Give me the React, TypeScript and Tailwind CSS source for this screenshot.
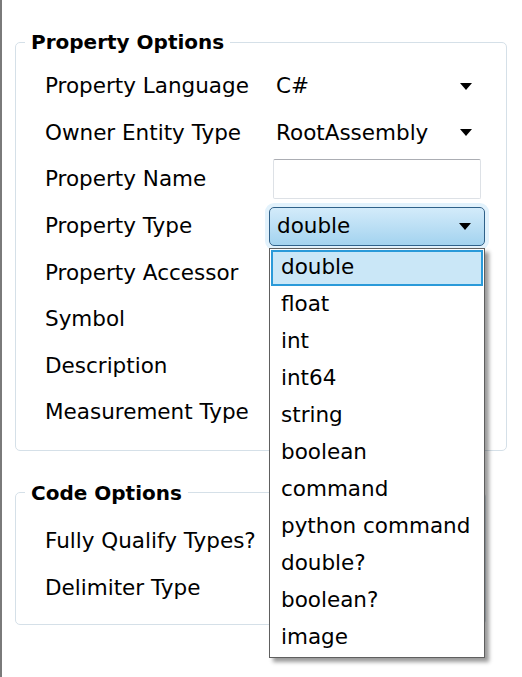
import React from "react";

const font = { fontFamily: '"DejaVu Sans", "Liberation Sans", sans-serif' };

const Arrow = () => (
  <svg width="12" height="7" viewBox="0 0 12 7" className="shrink-0">
    <path d="M0 0 H12 L6 7 Z" fill="#000" />
  </svg>
);

const PlainCombo: React.FC<{ value: string }> = ({ value }) => (
  <div className="h-[40px] flex items-center justify-between pl-[7px] pr-[13px]">
    <span>{value}</span>
    <Arrow />
  </div>
);

const typeOptions = [
  "double",
  "float",
  "int",
  "int64",
  "string",
  "boolean",
  "command",
  "python command",
  "double?",
  "boolean?",
  "image",
];

const TypeCombo = () => (
  <div className="relative">
    <div className="h-[39px] flex items-center justify-between pl-[7px] pr-[13px] rounded-[5px] border-[1.5px] border-[#2f6189] bg-gradient-to-b from-[#d3ebfa] to-[#a3d3ef] shadow-[0_0_0_4px_#e2f2fc]">
      <span>double</span>
      <Arrow />
    </div>

    {/* open drop-down list */}
    <div className="absolute left-0 top-full mt-[2px] w-[216px] z-10 bg-white border border-[#5f5f5f] p-[1px] shadow-[4px_4px_4px_rgba(0,0,0,0.4)]">
      {typeOptions.map((opt, i) => (
        <div
          key={opt}
          className={
            i === 0
              ? "h-[36px] flex items-center pl-[8px] border-2 border-[#2a9ad9] bg-[#cae7f7]"
              : "h-[37px] flex items-center pl-[10px]"
          }
        >
          {opt}
        </div>
      ))}
    </div>
  </div>
);

const Row: React.FC<{ label: string; children?: React.ReactNode }> = ({ label, children }) => (
  <div className="h-[46.6px] grid grid-cols-[224px_216px] items-center">
    <span>{label}</span>
    <div>{children}</div>
  </div>
);

export default function App() {
  return (
    <div
      style={font}
      className="w-[522px] h-[677px] bg-white border-l-2 border-[#7a7a7a] pl-[13px] pt-[30px] text-[21.5px] text-black overflow-hidden"
    >
      <fieldset className="w-[492px] border border-[#d5e0e8] rounded-[5px] pl-[29px] pt-[9px] pb-[14px]">
        <legend className="-ml-[20px] px-[6px] font-bold text-[20px] leading-[24px]">Property Options</legend>
        <Row label="Property Language">
          <PlainCombo value="C#" />
        </Row>
        <Row label="Owner Entity Type">
          <PlainCombo value="RootAssembly" />
        </Row>
        <Row label="Property Name">
          <div className="mx-[4px] h-[40px] bg-white border border-[#dde1e6] border-t-[#abadb3] rounded-[2px]" />
        </Row>
        <Row label="Property Type">
          <TypeCombo />
        </Row>
        <Row label="Property Accessor" />
        <Row label="Symbol" />
        <Row label="Description" />
        <Row label="Measurement Type" />
      </fieldset>

      <fieldset className="mt-[30px] w-[460px] border border-[#d5e0e8] rounded-[5px] pl-[29px] pt-[13px] pb-[13px]">
        <legend className="-ml-[20px] px-[6px] font-bold text-[20px] leading-[24px]">Code Options</legend>
        <Row label="Fully Qualify Types?" />
        <Row label="Delimiter Type" />
      </fieldset>
    </div>
  );
}
